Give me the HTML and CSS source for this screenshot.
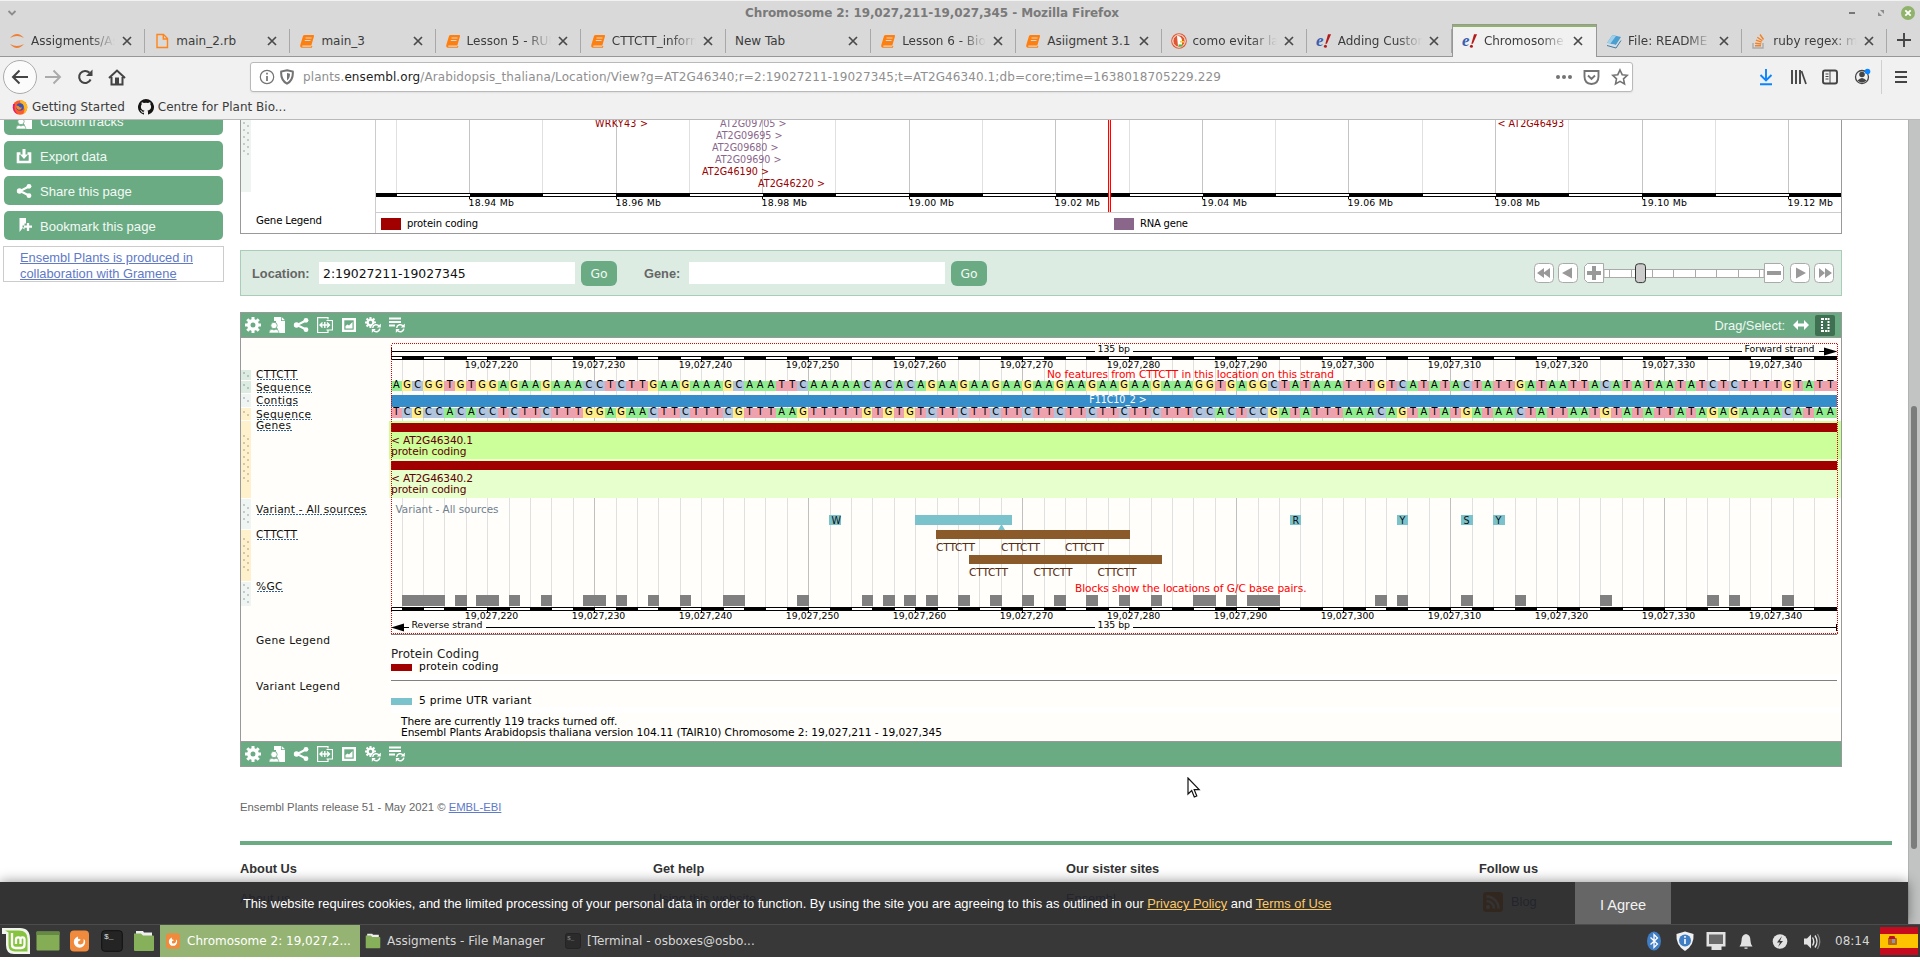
FILE: index.html
```html
<!DOCTYPE html>
<html lang="en">
<head>
<meta charset="utf-8">
<title>Chromosome 2: 19,027,211-19,027,345</title>
<link rel="stylesheet" href="styles.css">
</head>
<body>
<svg width="0" height="0" class="defs">
  <defs>
    <symbol id="x" viewBox="0 0 10 10"><path d="M1 1L9 9M9 1L1 9" stroke="#4a4a4a" stroke-width="1.700" fill="none"/></symbol>
    <symbol id="book" viewBox="0 0 16 16"><path d="M5.500 2H14a1 1 0 0 1 1 1.300L12.300 12.500H3.500q-1 1 .3 1.300H12l.6-1 .8.5-.6 1.500H3Q.8 14.500 1.300 12L4 3Q4.500 2 5.500 2Z" fill="#ff7f0e"/><path d="M6.500 5H12.500M5.800 7.500H11.500" stroke="#d9d9d9" stroke-width="1.200"/></symbol>
    <symbol id="ens" viewBox="0 0 18 16"><text x="0" y="13.500" font-family="Liberation Serif, serif" font-style="italic" font-weight="bold" font-size="19" fill="#3a5fb0">e</text><path d="M13.500 0.500L17 0.500L12.300 11L10.500 11Z" fill="#b51a1a"/><circle cx="10.600" cy="14" r="1.700" fill="#b51a1a"/></symbol>
    <symbol id="share" viewBox="0 0 16 16"><path d="M13 3.500L4 8L13 12.500" stroke="#fff" stroke-width="2" fill="none"/><circle cx="3.500" cy="8" r="2.700" fill="#fff"/><circle cx="13" cy="3.300" r="2.400" fill="#fff"/><circle cx="13" cy="12.700" r="2.400" fill="#fff"/></symbol>
    <symbol id="user" viewBox="0 0 16 16"><path d="M5 0h7v4h4v12H9V12l-2-2V4H5z" fill="#fff"/><path d="M12.700 0v3.300H16z" fill="#fff"/><circle cx="5" cy="8.500" r="3.200" fill="#fff" stroke="#6bab84" stroke-width=".8"/><path d="M0 16q0-3.500 3-3.700L5 13l2-.7q3 .2 3 3.700z" fill="#fff" stroke="#6bab84" stroke-width=".6"/></symbol>
    <symbol id="gear" viewBox="0 0 16 16"><circle cx="8" cy="8" r="4.200" fill="none" stroke="#fff" stroke-width="3.400"/><path d="M8 0v3M8 13v3M0 8h3M13 8h3M2.300 2.300l2 2M11.700 11.700l2 2M2.300 13.700l2-2M11.700 4.300l2-2" stroke="#fff" stroke-width="3"/></symbol>
    <symbol id="resize" viewBox="0 0 16 16"><path d="M11 13.500V15.500H.6V.6H11V2.500M9.500 3.500H15.500V13H9.500" fill="none" stroke="#fff" stroke-width="1.200"/><path d="M3 8h9M5.500 5.500L3 8l2.500 2.500M10 5.500L12.500 8 10 10.500M7.800 5v6" fill="none" stroke="#fff" stroke-width="1.400"/></symbol>
    <symbol id="img" viewBox="0 0 16 16"><path d="M1 1H15V15H1Z" fill="#fff"/><path d="M3.300 3.300H12.700V12.700H3.300Z" fill="#6bab84"/><path d="M4.500 11.500V9l2-1.500 1.500 1 3.500-3.500v6.500z" fill="#fff"/></symbol>
    <symbol id="cyc" viewBox="0 0 10 10"><path d="M1.200 4.500A3.800 3.800 0 0 1 8 2.800M8.800 5.500A3.800 3.800 0 0 1 2 7.200" stroke="#fff" stroke-width="1.600" fill="none"/><path d="M9.800 0v4.300H5.500zM.2 10V5.700h4.300z" fill="#fff"/></symbol>
    <symbol id="resetcfg" viewBox="0 0 16 16"><use href="#gear" width="11" height="11"/><circle cx="11.500" cy="11.300" r="5" fill="#6bab84"/><use href="#cyc" x="6.500" y="6.500" width="9.500" height="9.500"/></symbol>
    <symbol id="resetord" viewBox="0 0 16 16"><path d="M0 1.500H12M0 5H12M0 8.500H6" stroke="#fff" stroke-width="2"/><use href="#cyc" x="6.500" y="6.500" width="9.500" height="9.500"/></symbol>
    <symbol id="ff" viewBox="0 0 20 22"><rect x=".5" y=".5" width="19" height="21" rx="4" fill="#f08a3c"/><circle cx="10" cy="12" r="5.700" fill="#fff"/><path d="M9 5q6-1 7 6-1-2-2-2 1 5-3 5.500Q7.500 14.500 9 11q2 0 2-1.500-1-1-2.500-.5Q8 7 9 5z" fill="#f08a3c"/></symbol>
    <symbol id="folder" viewBox="0 0 22 22"><path d="M3 1h7l1 1.500h8V6H3z" fill="#eee"/><path d="M1 3.500L8 3.500 10 5.500H20a1 1 0 0 1 1 1V20a1 1 0 0 1-1 1H2a1 1 0 0 1-1-1z" fill="#86b15a"/></symbol>
    <symbol id="term" viewBox="0 0 22 22"><rect x=".7" y=".7" width="20.600" height="20.600" rx="3" fill="#242424" stroke="#111"/><text x="3" y="9" font-family="Liberation Mono,monospace" font-size="8" fill="#ddd">$_</text></symbol>
  </defs>
</svg>

<header class="chrome">
  <div class="titlebar">
    <svg class="tb-l" width="10" height="8" viewBox="0 0 10 8"><path d="M1.500 2L5 5.500 8.500 2" fill="none" stroke="#8c8c8c" stroke-width="1.800"/></svg>
    <span>Chromosome 2: 19,027,211-19,027,345 - Mozilla Firefox</span>
    <svg class="tb-r" width="76" height="16" viewBox="0 0 76 16"><path d="M10 8h6" stroke="#777" stroke-width="2"/><path d="M41 5h4v4zM39 7v4h4z" fill="#8c8c8c"/><circle cx="69" cy="8" r="7" fill="#8fb36a"/><path d="M66.300 5.300l5.400 5.400M71.700 5.300l-5.400 5.400" stroke="#fff" stroke-width="1.800"/></svg>
  </div>
  <div class="tabs">
    <div class="tab"><svg class="fav" viewBox="0 0 16 16"><path d="M1 5Q8-3 15 5 8 1 1 5zM1 11Q8 19 15 11 8 15 1 11z" fill="#ef7f36"/></svg><span class="tt fade">Assigments/Assig</span><svg class="cl"><use href="#x"/></svg></div>
    <div class="tab"><svg class="fav" viewBox="0 0 16 16"><path d="M3 1.500H9.500L13.500 5.500V14.500H3ZM9.300 1.500V6H13.500" fill="none" stroke="#ff8519" stroke-width="1.400"/></svg><span class="tt">main_2.rb</span><svg class="cl"><use href="#x"/></svg></div>
    <div class="tab"><svg class="fav"><use href="#book"/></svg><span class="tt">main_3</span><svg class="cl"><use href="#x"/></svg></div>
    <div class="tab"><svg class="fav"><use href="#book"/></svg><span class="tt fade">Lesson 5 - RUBY</span><svg class="cl"><use href="#x"/></svg></div>
    <div class="tab"><svg class="fav"><use href="#book"/></svg><span class="tt fade">CTTCTT_information</span><svg class="cl"><use href="#x"/></svg></div>
    <div class="tab"><span class="tt">New Tab</span><svg class="cl"><use href="#x"/></svg></div>
    <div class="tab"><svg class="fav"><use href="#book"/></svg><span class="tt fade">Lesson 6 - BioRuby</span><svg class="cl"><use href="#x"/></svg></div>
    <div class="tab"><svg class="fav"><use href="#book"/></svg><span class="tt">Asiigment 3.1</span><svg class="cl"><use href="#x"/></svg></div>
    <div class="tab"><svg class="fav" viewBox="0 0 16 16"><circle cx="8" cy="8" r="7.800" fill="#de5833"/><circle cx="8" cy="8" r="6.200" fill="none" stroke="#fff"/><path d="M6 3q5 0 5 5v5H7z" fill="#fff"/><path d="M9 8h4v1.500H9z" fill="#fdd20a"/><path d="M7.500 11.500h4v2h-4z" fill="#4cba3c"/></svg><span class="tt fade">como evitar la</span><svg class="cl"><use href="#x"/></svg></div>
    <div class="tab"><svg class="fav"><use href="#ens"/></svg><span class="tt fade">Adding Custom T</span><svg class="cl"><use href="#x"/></svg></div>
    <div class="tab active"><svg class="fav"><use href="#ens"/></svg><span class="tt fade">Chromosome 2:</span><svg class="cl"><use href="#x"/></svg></div>
    <div class="tab"><svg class="fav" viewBox="0 0 16 16"><path d="M6.500 2L15 4 10 12 1 10z" fill="#4b9fd0"/><path d="M6.500 2L10 3 4.500 10.500 1 10z" fill="#9ed0ea"/><path d="M1 10L10 12 15 5V7.500L10 15 1 12.500z" fill="#d5dde2"/><path d="M1 12.500l9 2.500 5-7.500" fill="none" stroke="#427ca4"/></svg><span class="tt fade">File: README — r</span><svg class="cl"><use href="#x"/></svg></div>
    <div class="tab"><svg class="fav" viewBox="0 0 16 16"><path d="M2 10v5h10v-5" fill="none" stroke="#aaa" stroke-width="1.400"/><path d="M4 12.800h6M4.200 10.200l6 .8M4.900 7.200l5.700 2M6.300 4.200l5 3.600M9 1.500l3.500 5" stroke="#f48024" stroke-width="1.400"/></svg><span class="tt fade">ruby regex: mat</span><svg class="cl"><use href="#x"/></svg></div>
    <svg class="plus" width="14" height="14" viewBox="0 0 14 14"><path d="M7 0V14M0 7H14" stroke="#444" stroke-width="1.900"/></svg>
  </div>
  <div class="nav">
    <div class="back"><svg width="18" height="16" viewBox="0 0 18 16"><path d="M17 8H2M8.500 1.500L2 8l6.500 6.500" fill="none" stroke="#444" stroke-width="2"/></svg></div>
    <svg class="fwd" width="18" height="16" viewBox="0 0 18 16"><path d="M1 8H16M9.500 1.500L16 8l-6.500 6.500" fill="none" stroke="#aaa" stroke-width="1.900"/></svg>
    <svg class="rel" width="16" height="16" viewBox="0 0 16 16"><path d="M13.600 10.500A6 6 0 1 1 12.500 3.800" fill="none" stroke="#444" stroke-width="2.100"/><path d="M15.500 .5V7H9z" fill="#444"/></svg>
    <svg class="home" width="18" height="17" viewBox="0 0 18 17"><path d="M1 9L9 1.500 17 9M3.500 8V15.500H14.500V8" fill="none" stroke="#444" stroke-width="2"/><path d="M7 8.500h4V16H7z" fill="#444"/></svg>
    <div class="url">
      <svg width="16" height="16" viewBox="0 0 16 16"><circle cx="8" cy="8" r="6.700" fill="none" stroke="#737373" stroke-width="1.200"/><path d="M8 7v5M8 3.800v1.700" stroke="#737373" stroke-width="1.700"/></svg>
      <svg class="shield" width="14" height="16" viewBox="0 0 14 16"><path d="M7 1.200L12.800 2.500Q13.500 11 7 14.700.5 11 1.200 2.500Z" fill="none" stroke="#737373" stroke-width="2"/><path d="M7 4L10 4.800Q10 9.500 7 11.500z" fill="#737373"/></svg>
      <span class="addr">plants.<b>ensembl.org</b>/Arabidopsis_thaliana/Location/View?g=AT2G46340;r=2:19027211-19027345;t=AT2G46340.1;db=core;time=1638018705229.229</span>
      <svg class="acts" width="76" height="18" viewBox="0 0 76 18"><g fill="#737373"><circle cx="4" cy="9" r="2"/><circle cx="10" cy="9" r="2"/><circle cx="16" cy="9" r="2"/></g><path d="M30.500 3H44.500V8.500Q44.500 15.500 37.500 16 30.500 15.500 30.500 8.500ZM34 7.500l3.500 3.500L41 7.500" fill="none" stroke="#737373" stroke-width="1.900"/><path d="M66 2l2.200 4.700 5 .6-3.700 3.500 1 5.200-4.500-2.600L61.500 16l1-5.200-3.700-3.500 5-.6z" fill="none" stroke="#737373" stroke-width="1.600"/></svg>
    </div>
    <svg class="tools" width="160" height="34" viewBox="0 0 160 34"><path d="M14 9V20M8.500 15L14 20.500 19.500 15M8 24.300H20" fill="none" stroke="#0a84ff" stroke-width="1.900"/><path d="M40 10V24M44 10V24M48 10V24" stroke="#444" stroke-width="1.900"/><path d="M49.500 11L54 24" stroke="#444" stroke-width="1.700"/><rect x="71" y="10.500" width="14" height="13" rx="2" fill="none" stroke="#444" stroke-width="1.900"/><path d="M78 10V24M73.500 14h3M73.500 16.500h3M73.500 19h3" stroke="#444"/><circle cx="110" cy="17" r="6.500" fill="none" stroke="#444" stroke-width="1.300"/><circle cx="110" cy="14.500" r="2.800" fill="#444"/><path d="M105.500 20.500q4.500-5 9 0-4.500 4-9 0z" fill="#444"/><circle cx="115.500" cy="11.500" r="2.800" fill="#0a84ff"/><path d="M129.500 0V34" stroke="#d0d0d0"/><path d="M143 12h12M143 17h12M143 22h12" stroke="#444" stroke-width="2"/></svg>
  </div>
  <div class="bookmarks">
    <svg width="16" height="16" viewBox="0 0 16 16"><circle cx="8" cy="8.500" r="7.300" fill="#ff5b26"/><path d="M8 1q7 1 7.300 7.500Q15 13 11 15q3-5 0-8Q8 5 8 1z" fill="#ffb820"/><path d="M1 5q-1 8 5 10.300Q1 11 3 5z" fill="#e31587"/><circle cx="8" cy="8" r="3.800" fill="#3756b8"/><path d="M4 6.500q3 0 4 2h2q-1 3-4 2-2-1-2-4z" fill="#ff8a1c"/></svg><span>Getting Started</span>
    <svg class="gh" width="16" height="16" viewBox="0 0 16 16"><path fill="#161514" d="M8 0a8 8 0 0 0-2.500 15.600c.4 0 .5-.2.500-.4v-1.500c-2.200.5-2.700-1-2.700-1-.4-.9-.9-1.100-.9-1.100-.7-.5.100-.5.100-.5.800 0 1.200.8 1.200.8.700 1.200 1.900.9 2.300.7 0-.6.300-.9.500-1.100-1.800-.2-3.600-.9-3.600-4 0-.9.300-1.600.8-2.100 0-.2-.4-1 .1-2.100 0 0 .7-.2 2.200.8a7.700 7.700 0 0 1 4 0c1.500-1 2.200-.8 2.200-.8.500 1.100.1 1.900.1 2.100.5.500.8 1.200.8 2.100 0 3.100-1.900 3.800-3.700 4 .3.200.6.700.6 1.500v2.200c0 .2.100.4.500.4A8 8 0 0 0 8 0z"/></svg><span>Centre for Plant Bio...</span>
  </div>
</header>

<div class="viewport">
  <aside class="side">
    <a class="sbtn"><svg><use href="#user"/></svg>Custom tracks</a>
    <a class="sbtn"><svg viewBox="0 0 16 16"><path d="M4.500 5.500H2V14H14V5.500H11.500" fill="none" stroke="#fff" stroke-width="2.600"/><path d="M6.500 1h3v5.500H12L8 11 4 6.500H6.500z" fill="#fff"/></svg>Export data</a>
    <a class="sbtn"><svg><use href="#share"/></svg>Share this page</a>
    <a class="sbtn"><svg viewBox="0 0 16 16"><path d="M3.500 0H10V5.500H8.500V7.500H6.500V9.500H8.500V11.500L6.700 10 3.500 14z" fill="#fff"/><path d="M12 5v8M8 8.700h8" stroke="#fff" stroke-width="2.300"/></svg>Bookmark this page</a>
    <div class="gram"><a>Ensembl Plants is produced in collaboration with Gramene</a></div>
  </aside>
  <main class="main">
    <div class="region"><svg id="region" width="1602" height="114" viewBox="240 120 1602 114"></svg></div>
    <div class="locbar">
      <label class="l1">Location:</label><div class="inp">2:19027211-19027345</div><button>Go</button>
      <label class="l2">Gene:</label><div class="inp"></div><button>Go</button>
      <svg class="zoomer" width="302" height="22" viewBox="1533 262 302 22">
        <g fill="#fff" stroke="#aaa"><rect x="1534.500" y="263.500" width="19" height="19" rx="4"/><rect x="1558.500" y="263.500" width="19" height="19" rx="4"/><rect x="1604" y="269.500" width="160" height="8"/><path d="M1587.500 263.500H1603.500V282.500H1587.500l-3-3V266.500zM1764.500 263.500H1780.500l3 3V279.500l-3 3H1764.500z"/><rect x="1790.500" y="263.500" width="19" height="19" rx="4"/><rect x="1814.500" y="263.500" width="19" height="19" rx="4"/><path d="M1609.500 269v9M1631.500 269v9M1652.500 269v9M1673.500 269v9M1695.500 269v9M1716.500 269v9M1738.500 269v9M1759.500 269v9"/></g>
        <path d="M1544 268v10l-7-5zM1550 268v10l-7-5zM1572 267.500v11l-10-5.500zM1796 267.500v11l10-5.500zM1819 268v10l6-5zM1825 268v10l7-5zM1592 266h4v14h-4zM1587 271h14v4h-14zM1767 271h14v4h-14z" fill="#999"/>
        <rect x="1635.500" y="263.800" width="10" height="18.800" rx="3" fill="#ccc" stroke="#333"/>
      </svg>
    </div>
    <section class="panel">
      <div class="bar top"><svg><use href="#gear"/></svg><svg><use href="#user"/></svg><svg><use href="#share"/></svg><svg><use href="#resize"/></svg><svg><use href="#img"/></svg><svg><use href="#resetcfg"/></svg><svg><use href="#resetord"/></svg>
        <span class="ds">Drag/Select:</span>
        <svg class="dr" viewBox="0 0 16 16"><path d="M0 8L5 3V6.500H11V3L16 8 11 13V9.500H5V13z" fill="#fff"/></svg>
        <span class="sel"><svg viewBox="0 0 16 16"><path d="M5 2H12M5 14H12M5 1V15M11.500 1V15" fill="none" stroke="#fff" stroke-width="2" stroke-dasharray="2 1"/></svg></span>
      </div>
      <svg id="view" width="1600" height="403" viewBox="241 338 1600 403"></svg>
      <div class="bar bot"><svg><use href="#gear"/></svg><svg><use href="#user"/></svg><svg><use href="#share"/></svg><svg><use href="#resize"/></svg><svg><use href="#img"/></svg><svg><use href="#resetcfg"/></svg><svg><use href="#resetord"/></svg></div>
    </section>
    <p class="release">Ensembl Plants release 51 - May 2021 © <a>EMBL-EBI</a></p>
    <footer class="foot">
      <div><h3>About Us</h3><a>About us</a></div>
      <div><h3>Get help</h3><a>Using this website</a></div>
      <div><h3>Our sister sites</h3><a>Ensembl</a></div>
      <div><h3>Follow us</h3><a class="blog"><svg width="20" height="20" viewBox="0 0 20 20"><rect width="20" height="20" rx="3" fill="#f26a0c"/><circle cx="5" cy="15" r="2" fill="#fff"/><path d="M3.500 9A7.500 7.500 0 0 1 11 16.500M3.500 4.500A12 12 0 0 1 15.500 16.500" fill="none" stroke="#fff" stroke-width="2.400"/></svg>Blog</a></div>
    </footer>
  </main>
  <div class="scroll"><i></i></div>
  <div class="cookie"><span>This website requires cookies, and the limited processing of your personal data in order to function. By using the site you are agreeing to this as outlined in our <a>Privacy Policy</a> and <a>Terms of Use</a></span><button>I Agree</button></div>
  <svg class="cursor" width="14" height="22" viewBox="0 0 14 22"><path d="M1 1V17L4.700 13.500 7.300 20 9.800 19 7.200 12.700H12.200z" fill="#fff" stroke="#111" stroke-width="1.200"/></svg>
</div>

<div class="taskbar">
  <svg class="mint" width="30" height="28" viewBox="0 0 30 28"><path d="M1 1H19Q29 1 29 12V27H13Q5 27 5 18V7H1z" fill="#f2f5ee"/><path d="M4 3.500H18Q26.500 3.500 26.500 12V24.500H14Q7.500 24.500 7.500 18V5.500z" fill="#86c440"/><path d="M11 6V17.500Q11 21 14.500 21H20Q23.500 21 23.500 17.500V12.500Q23.500 10.300 21.500 10.300T19.500 12.500V17M19.500 12.500Q19.500 10.300 17.300 10.300T15 12.500V17" fill="none" stroke="#fff" stroke-width="2.300"/></svg>
  <svg class="q1" width="24" height="20" viewBox="0 0 24 20"><rect x=".5" y=".5" width="23" height="19" rx="1" fill="#84ad56"/><path d="M.5.500h23V4H.5z" fill="#668a45"/></svg>
  <svg class="q2" width="21" height="22"><use href="#ff"/></svg>
  <svg class="q3" width="22" height="22"><use href="#term"/></svg>
  <svg class="q4" width="22" height="22"><use href="#folder"/></svg>
  <div class="task on"><svg><use href="#ff"/></svg>Chromosome 2: 19,027,2...</div>
  <div class="task"><svg><use href="#folder"/></svg>Assigments - File Manager</div>
  <div class="task dim"><svg><use href="#term"/></svg>[Terminal - osboxes@osbo...</div>
  <svg class="tray" width="186" height="26" viewBox="1640 928 186 26">
    <ellipse cx="1654" cy="941" rx="7" ry="9.500" fill="#3f7dc4"/><path d="M1650.500 937.500l7 6.500-3.500 3.500V934.500l3.500 3.500-7 6.500" fill="none" stroke="#fff" stroke-width="1.300"/>
    <path d="M1685 931.500l8.500 2.500q1 11-8.500 17-9.500-6-8.500-17z" fill="#f0f0f0"/><circle cx="1685" cy="940.500" r="6" fill="#3f7dc4"/><path d="M1685 939v5M1685 936v1.800" stroke="#fff" stroke-width="1.600"/>
    <path d="M1706.500 932H1725.500V946.500H1721.500V950H1711.500V946.500H1706.500z" fill="#e2e2e2"/><path d="M1709 934.500H1723V944H1709z" fill="#6a6a6a"/>
    <path d="M1746 934q4.500.5 4.500 7 0 3 2 5.500h-13q2-2.500 2-5.500 0-6.500 4.500-7zM1744.500 947.500h3v1.200h-3z" fill="#e2e2e2"/>
    <circle cx="1780" cy="941.500" r="7.300" fill="#e2e2e2"/><path d="M1782 936l-5 6.500h3l-2 4.500 5-6h-3z" fill="#383838"/>
    <path d="M1804 938.500h3l4-4v14l-4-4h-3z" fill="#e2e2e2"/><path d="M1812.500 937.500q2.500 4 0 8M1815 935.500q4 6 0 12" fill="none" stroke="#e2e2e2" stroke-width="1.400"/><path d="M1817.500 934q4.500 7.500 0 15" fill="none" stroke="#888" stroke-width="1.200"/>
  </svg>
  <span class="clock">08:14</span>
  <svg class="flag" width="38" height="28" viewBox="0 0 38 28"><rect width="38" height="28" fill="#c60b1e"/><rect y="7" width="38" height="14" fill="#ffc400"/><rect x="8" y="11" width="9" height="7" rx="1" fill="#b5651d"/><path d="M9.500 9h5l1 3h-7z" fill="#c60b1e"/><path d="M12 12h3v4h-3z" fill="#8d99a3"/></svg>
</div>
<script src="tracks.js"></script>
</body>
</html>
```
FILE: styles.css
```css
* { box-sizing: border-box; }
body { margin: 0; width: 1920px; height: 957px; overflow: hidden; background: #fff; font-family: "Liberation Sans", Arial, sans-serif; display: flex; flex-direction: column; }
svg { display: block; flex: none; }
.defs { position: absolute; }
.chrome { height: 120px; flex: none; background: #f1f1f1; border-bottom: 1px solid #b9b9b9; font-family: "DejaVu Sans", sans-serif; font-size: 12px; color: #3c3c3c; }
.titlebar { height: 24px; background: #d9d9d9; border-top: 1px solid #f2f2f2; display: flex; align-items: center; padding: 0 5px 0 7px; }
.titlebar span { flex: 1; text-align: center; font-weight: bold; font-size: 12px; color: #7a7a7a; padding-left: 8px; letter-spacing: -.1px; }
.tabs { height: 33px; background: #d9d9d9; border-bottom: 1px solid #979797; display: flex; }
.tab { width: 145.200px; height: 33px; padding: 0 13px 0 9px; display: flex; align-items: center; gap: 6px; position: relative; flex: none; }
.tab::after { content: ""; position: absolute; right: 0; top: 5px; height: 24px; width: 1px; background: #a8a8a8; }
.tab.active { background: #f1f1f1; border: 1px solid #979797; border-bottom: 0; box-shadow: inset 0 2px #8fb36a; }
.tab.active::after { display: none; }
.fav { width: 16px; height: 16px; }
.tt { flex: 1; overflow: hidden; white-space: nowrap; line-height: 20px; }
.tt.fade { -webkit-mask-image: linear-gradient(90deg, #000 calc(100% - 26px), transparent calc(100% - 1px)); mask-image: linear-gradient(90deg, #000 calc(100% - 26px), transparent calc(100% - 1px)); }
.cl { width: 10px; height: 10px; }
.plus { margin: 9px 0 0 10px; }
.nav { height: 40px; display: flex; align-items: center; padding-left: 3px; }
.back { width: 34px; height: 34px; border-radius: 50%; background: #fbfbfb; border: 1px solid #ababab; display: flex; align-items: center; justify-content: center; }
.fwd { margin-left: 7px; }
.rel { margin-left: 15px; }
.home { margin-left: 15px; }
.url { margin-left: 124px; width: 1383px; height: 30px; background: #fff; border: 1px solid #b9b9b9; border-radius: 3px; box-shadow: 0 1px 2px rgba(0,0,0,.07); display: flex; align-items: center; padding-left: 8px; }
.shield { margin-left: 5px; }
.addr { margin-left: 9px; color: #8f8f8f; white-space: nowrap; flex: 1; letter-spacing: .1px; }
.addr b { font-weight: normal; color: #222; }
.acts { margin-right: 2px; }
.tools { margin-left: 119px; }
.bookmarks { height: 20px; display: flex; align-items: center; padding-left: 12px; }
.bookmarks span { margin-left: 4px; }
.bookmarks .gh { margin-left: 13px; }

.viewport { height: 804px; flex: none; position: relative; overflow: hidden; display: flex; }
.side { width: 240px; flex: none; display: flex; flex-direction: column; gap: 6px; margin-top: -14px; padding-left: 4px; }
.sbtn { width: 219px; height: 29px; border-radius: 5px; background: #6bab84; color: #f3faf5; font-size: 13.100px; display: flex; align-items: center; padding: 1px 0 0 12px; gap: 8px; flex: none; }
.sbtn svg { width: 16px; height: 16px; }
.gram { margin-left: -1px; width: 221px; height: 36px; border: 1px solid #ccc; font-size: 12.870px; line-height: 16px; padding: 3px 20px 0 16px; }
.gram a, .release a { color: #6079c8; text-decoration: underline; }
.main { width: 1668px; flex: none; display: flex; flex-direction: column; align-items: flex-start; }
.region { height: 114px; }
.locbar { margin-top: 16px; width: 1602px; height: 46px; background: #ddece3; border: 1px solid #a9cdb8; display: flex; align-items: center; padding: 0 6px 0 11px; font-size: 12.800px; font-weight: bold; color: #666; flex: none; }
.inp { width: 256px; height: 22px; background: #fff; color: #111; font: 12.400px/23px "DejaVu Sans", sans-serif; padding-left: 4px; }
.l1 { width: 67px; }
.l2 { width: 45px; margin-left: 27px; }
.locbar button { margin: 0 0 0 6px; width: 36px; height: 25px; border: 0; border-radius: 6px; background: #6bab84; color: #f0f8f3; font: 12.400px "DejaVu Sans", sans-serif; padding: 0; }
.zoomer { margin-left: auto; }
.panel { margin-top: 16px; width: 1602px; height: 455px; border: 1px solid #999; flex: none; }
.bar { height: 25px; background: #6bab84; display: flex; align-items: center; padding: 0 6px 0 4px; gap: 8px; color: #f0f8f3; font-size: 12.800px; }
.bar svg { width: 16px; height: 16px; }
.bar.top { border-bottom: 1px solid #999; }
.bar.bot { border-top: 1px solid #999; }
.ds { margin-left: auto; }
.sel { width: 20px; height: 21px; border-radius: 2px; background: #3f7052; display: flex; align-items: center; justify-content: center; margin-left: -2px; }
#view { background: #fffefa; }
.release { margin: 33px 0 0; font-size: 11.300px; line-height: 14px; color: #666; white-space: nowrap; }
.foot { margin-top: 27px; width: 1652px; border-top: 4px solid #6bab84; display: grid; grid-template-columns: repeat(4, 413px); color: #333; font-size: 12.800px; }
.foot h3 { margin: 16px 0 0; font-size: 12.800px; line-height: 16px; }
.foot a { display: block; margin-top: 14px; color: #3344a8; line-height: 16px; }
.foot .blog { display: flex; align-items: center; gap: 8px; margin: 15px 0 0 4px; }
.scroll { width: 12px; background: #c2c4c3; border-left: 1px solid #b2b2b2; padding: 286px 0 0 2px; flex: none; }
.scroll i { display: block; width: 6px; height: 443px; border-radius: 3px; background: #7b7d7d; }
.cookie { position: absolute; left: 0; right: 12px; bottom: 0; height: 42px; background: rgba(34,34,34,.92); box-shadow: 0 0 12px rgba(0,0,0,.45); color: #fff; font-size: 12.870px; display: flex; padding-left: 243px; }
.cookie span { line-height: 43px; width: 1332px; white-space: nowrap; }
.cookie a { color: #fdc966; text-decoration: underline; }
.cookie button { width: 96px; border: 0; background: #666; color: #f2f2f2; font: 14.600px "Liberation Sans", sans-serif; padding-top: 5px; }
.cursor { position: absolute; left: 1187px; top: 657px; }

.taskbar { height: 33px; flex: none; background: #383838; border-top: 1px solid #4c4c4c; display: flex; align-items: center; font-family: "DejaVu Sans", sans-serif; font-size: 12px; color: #d6d6d6; }
.mint { margin-left: 1px; }
.q1 { margin-left: 5px; }
.q2 { margin-left: 9px; }
.q3 { margin-left: 11px; }
.q4 { margin-left: 10px; margin-right: 5px; }
.task { width: 200px; height: 32px; display: flex; align-items: center; gap: 6px; padding-left: 5px; white-space: nowrap; flex: none; }
.task svg { width: 16px; height: 16px; }
.task.on { background: #95b473; color: #fff; }
.task.dim svg { opacity: .6; }
.tray { margin-left: 880px; }
.clock { margin-left: 9px; width: 45px; }
```
FILE: tracks.js
```js
const esc = s => s.replace(/</g, '&lt;').replace(/>/g, '&gt;');
const rect = (x, y, w, h, f) => `<rect x="${x}" y="${y}" width="${w}" height="${h}" fill="${f}" shape-rendering="crispEdges"/>`;
const text = (x, y, s, size, fill = '#000', len = 0) =>
  `<text x="${x}" y="${y}" font-family="DejaVu Sans, sans-serif" font-size="${size}" fill="${fill}"${len ? ` textLength="${len}"` : ''}>${esc(s)}</text>`;

/* small drag-handle dots on the left strip */
function handle(y1, y2, color, rows) {
  let o = rect(241, y1, 10, y2 - y1, color);
  const mid = (y1 + y2) / 2, top = Math.round(mid - rows * 3.5);
  for (let i = 0; i < rows; i++) {
    o += rect(243, top + i * 7, 2, 2, 'rgba(0,0,0,.17)') + rect(247, top + 3 + i * 7, 2, 2, 'rgba(0,0,0,.17)');
  }
  return o;
}

function drawRegion() {
  let o = rect(240, 120, 1602, 114, '#fff') + rect(241, 120, 10, 72, '#eef5f1');
  for (let i = 0; i < 5; i++) o += rect(243, 122 + i * 7, 2, 2, '#c4ccc7') + rect(247, 125 + i * 7, 2, 2, '#c4ccc7');
  o += rect(375, 120, 1, 113, '#ccc') + rect(376, 212, 1465, 1, '#ccc');
  const step = 73.29;
  for (let i = -1; i < 19; i++) {
    const x = Math.round(469 + i * step);
    o += rect(x, 120, 1, 73, i % 2 ? '#e0e0e0' : '#c4c4c4');
  }
  o += rect(376, 193, 1465, 4, '#000');
  for (let i = -1; i < 18; i += 2) o += rect(Math.round(470 + i * step), 194, 73, 2, '#fff');
  for (let i = 0; i < 10; i++) {
    const x = Math.round(469 + i * 2 * step);
    o += rect(x, 196, 1, 3, '#000') + text(x - 0.5, 205.6, (18.94 + i * 0.02).toFixed(2) + ' Mb', 9.33, '#000', 45.5);
  }
  const R = '#990000', P = '#8b668b';
  [[595, 127, 'WRKY43 >', R, 53], [720, 127, 'AT2G09705 >', P, 66.5], [716, 139, 'AT2G09695 >', P, 66.5],
   [712, 151, 'AT2G09680 >', P, 66.5], [715, 163, 'AT2G09690 >', P, 66.5], [702, 175, 'AT2G46190 >', R, 67],
   [758, 187, 'AT2G46220 >', R, 67], [1497.5, 127, '< AT2G46493', R, 66.5]
  ].forEach(g => { o += text(g[0], g[1], g[2], 9.6, g[3], g[4]); });
  o += rect(1108, 120, 3, 92, '#ffd8d2') + rect(1108, 120, 1, 92, '#f00') + rect(1110, 120, 1, 92, '#f00');
  o += text(256, 224, 'Gene Legend', 10.2, '#000', 66);
  o += rect(381, 218, 20, 12, '#a00000') + text(407, 227, 'protein coding', 10, '#000', 71);
  o += rect(1114, 218, 20, 12, P) + text(1140, 227, 'RNA gene', 10, '#000', 48);
  o += rect(240, 120, 1, 114, '#999') + rect(1841, 120, 1, 114, '#999') + rect(240, 233, 1602, 1, '#999');
  document.getElementById('region').innerHTML = o;
}

function drawView() {
  const seq = 'AGCGGTGTGGAGAAGAAACCTCTTGAAGAAAGCAAATTCAAAAACACACAGAAGAAGAAGAAGAAGAAGAAGAAAGGTGAGGCTATAAATTTGTCATATACTATTGATAATTACATATAATATCTCTTTTGTATT';
  const comp = { A: 'T', T: 'A', G: 'C', C: 'G' };
  const col = { A: '#90ee90', G: '#ffec8b', C: '#b0c4de', T: '#eea2ad' };
  const bp = 10.702;
  const X = i => i === 135 ? 1837 : Math.round(391 + i * bp - 0.2);
  let o = '';
  for (let i = 1; i < 135; i += 2) {
    const c = (i - 19) % 20 === 0 ? '#c0c0c0' : '#e0e0e0';
    o += rect(X(i), 360, 1, 61, c) + rect(X(i), 498, 1, 109, c);
  }
  for (const y of [356, 607]) {
    o += rect(391, y, 1446, 4, '#000');
    o += rect(392, y + 1, X(1) - 392, 2, '#fff');
    for (let i = 3; i < 133; i += 4) o += rect(X(i) + 1, y + 1, X(i + 2) - X(i) - 1, 2, '#fff');
    for (let i = 9; i < 135; i += 10) {
      o += rect(X(i), y + 4, 1, 2, '#000') + text(X(i) - 22.2, y + 12, '19,027,' + (211 + i), 9.33, '#000', 53.5);
    }
  }
  /* strand arrows */
  o += rect(391, 351, 704, 1, '#000') + rect(1133, 351, 609, 1, '#000') + rect(1819, 351, 8, 1, '#000') + rect(391, 348, 1, 8, '#000');
  o += '<path d="M1824 347.500L1837.500 351.500L1824 355.500Z" fill="#000"/>';
  o += text(1097.5, 352, '135 bp', 9.33, '#000', 32.5) + text(1744.5, 352, 'Forward strand', 9.33, '#000', 70);
  o += rect(404, 627, 5, 1, '#000') + rect(486, 627, 609, 1, '#000') + rect(1133, 627, 704, 1, '#000') + rect(1836, 624, 1, 7, '#000');
  o += '<path d="M391 627.500L404 623.500V631.500Z" fill="#000"/>';
  o += text(1097.5, 628, '135 bp', 9.33, '#000', 32.5) + text(411.5, 628, 'Reverse strand', 9.33, '#000', 71);

  o += text(1047, 378, 'No features from CTTCTT in this location on this strand', 10.6, '#f00', 287);
  for (let i = 0; i < 135; i++) {
    const a = seq[i], b = comp[a], w = X(i + 1) - X(i);
    o += rect(X(i), 381, w, 10, col[a]) + rect(X(i), 408, w, 10, col[b]);
    o += `<g text-anchor="middle">${text(391 + (i + .5) * bp, 388.3, a, 9.8)}${text(391 + (i + .5) * bp, 415.3, b, 9.8)}</g>`;
    if (a === 'G' || a === 'C') o += rect(X(i), 595, w + 1, 11, '#808080');
  }
  o += rect(391, 395, 1446, 12, '#358dc9') + text(1089.3, 403, 'F11C10_2 >', 9.6, '#fff', 57.5);

  /* gene models */
  o += rect(389, 421, 1452, 38, '#ccff99') + rect(389, 459, 1452, 39, '#e6ffcc');
  o += rect(391, 423, 1446, 9, '#a00000') + rect(391, 461, 1446, 9, '#a00000');
  [444, 482].forEach((y, k) => {
    o += text(391, y, '< AT2G46340.' + (k + 1), 10.67, '#600000', 82) + text(391, y + 11, 'protein coding', 10.67, '#600000', 75.5);
  });

  /* variants */
  const V = '#7ac3cd';
  o += text(395.5, 513, 'Variant - All sources', 10.4, '#708090', 103);
  o += rect(915, 515, 97, 10, V) + '<path d="M1001.500 524L1005 530H998Z" fill="' + V + '"/>';
  [[829, 12, 'W'], [1290, 11, 'R'], [1397, 11, 'Y'], [1461, 12, 'S'], [1493, 12, 'Y']].forEach(v => {
    o += rect(v[0], 515, v[1], 10, V) + text(v[0] + 2.5, 524, v[2], 9.6, '#111');
  });
  [[936, 1130, 530, [936, 1001, 1065]], [969, 1162, 555, [969, 1033.4, 1097.4]]].forEach(r => {
    o += rect(r[0], r[2], r[1] - r[0], 9, '#8b5a2b');
    r[3].forEach(x => { o += text(x, r[2] + 21, 'CTTCTT', 10.67, '#532a12', 39); });
  });
  o += text(1075, 592, 'Blocks show the locations of G/C base pairs.', 10.6, '#f00', 231.5);

  /* selection frame */
  o += '<path d="M391.500 343.500H1837.500V633.500H391.500Z" fill="none" stroke="#d00" stroke-dasharray="1 1" shape-rendering="crispEdges"/>';
  o += rect(391, 634, 1446, 1, '#808080');

  /* legends */
  o += text(391, 658, 'Protein Coding', 11.9, '#222', 88);
  o += rect(391, 664, 21, 7, '#a00000') + text(419, 670, 'protein coding', 10.67, '#000', 79.5);
  o += rect(391, 674, 1450, 6, '#fff') + rect(391, 680, 1446, 1, '#808080');
  o += rect(391, 698, 21, 7, V) + text(419, 704, '5 prime UTR variant', 10.67, '#000', 112.5);
  o += rect(391, 707, 1450, 6, '#fff');
  o += text(401, 725, 'There are currently 119 tracks turned off.', 10.67, '#000', 216.5);
  o += text(401, 736, 'Ensembl Plants Arabidopsis thaliana version 104.11 (TAIR10) Chromosome 2: 19,027,211 - 19,027,345', 10.67, '#000', 541);

  /* track labels */
  const G = '#ddece3', L = '#eef5f3', Y = '#fff1cc';
  o += handle(370, 380, G, 1) + handle(381, 393, G, 1) + handle(394, 407, L, 1) + handle(408, 420, Y, 1);
  o += handle(421, 498, Y, 7) + handle(499, 529, L, 3) + handle(530, 581, Y, 5) + handle(582, 606, L, 3);
  [['CTTCTT', 378, 41], ['Sequence', 391, 55], ['Contigs', 404, 42], ['Sequence', 418, 55], ['Genes', 429, 35],
   ['Variant - All sources', 513, 110], ['CTTCTT', 538, 41], ['%GC', 590, 26.5]].forEach(t => {
    o += text(256, t[1], t[0], 10.67, '#111', t[2]);
    o += `<path d="M257 ${t[1] + 1.5}h${t[2]}" stroke="#2f6096" stroke-dasharray="2 1" shape-rendering="crispEdges"/>`;
  });
  o += text(256, 644, 'Gene Legend', 10.67, '#111', 74) + text(256, 690, 'Variant Legend', 10.67, '#111', 84);
  document.getElementById('view').innerHTML = o;
}

drawRegion();
drawView();
```
